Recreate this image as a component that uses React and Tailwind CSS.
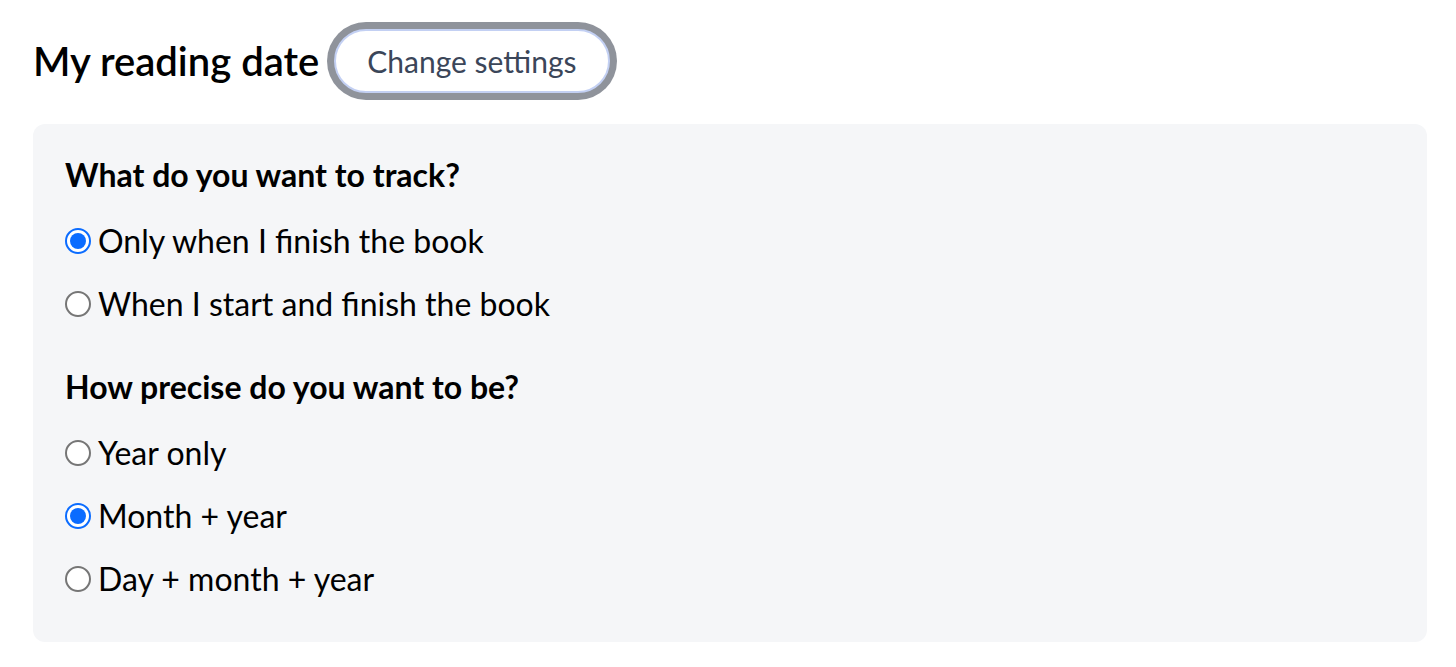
import React, { useState } from "react";

const font = { fontFamily: "Lato, 'Noto Sans', sans-serif" };

function Radio({ checked, label, onSelect }) {
  return (
    <label
      className="flex items-center gap-[7px] h-[63px] cursor-pointer"
      onClick={onSelect}
    >
      {checked ? (
        <span className="w-[26px] h-[26px] rounded-full border-[2px] border-[#0b6cff] bg-white flex items-center justify-center shrink-0">
          <span className="w-[16px] h-[16px] rounded-full bg-[#0b6cff]" />
        </span>
      ) : (
        <span className="w-[26px] h-[26px] rounded-full border-[2px] border-[#767676] bg-white shrink-0" />
      )}
      <span className="text-[32px] text-black leading-none">{label}</span>
    </label>
  );
}

export default function App() {
  const [track, setTrack] = useState("finish");
  const [precision, setPrecision] = useState("month");

  return (
    <div className="w-[1456px] h-[667px] bg-white pt-[22px] pl-[33px]" style={font}>
      <div className="flex items-center gap-[8px]">
        <h1 className="text-[40px] font-semibold text-black leading-none">
          My reading date
        </h1>
        <button className="h-[78px] px-[7px] rounded-full bg-[#8f939b] flex items-center">
          <span className="h-[64px] px-[31px] rounded-full bg-white border-[2px] border-[#c3d0f3] flex items-center text-[30px] text-[#3b4659]">
            Change settings
          </span>
        </button>
      </div>

      <div className="mt-[24px] w-[1394px] rounded-[12px] bg-[#f5f6f8] px-[32px] pt-[35px] pb-[32px]">
        <h2 className="text-[32px] font-bold text-black leading-none h-[32px]">
          What do you want to track?
        </h2>
        <div className="mt-[18px]">
          <Radio
            checked={track === "finish"}
            label="Only when I finish the book"
            onSelect={() => setTrack("finish")}
          />
          <Radio
            checked={track === "both"}
            label="When I start and finish the book"
            onSelect={() => setTrack("both")}
          />
        </div>

        <h2 className="mt-[36px] text-[32px] font-bold text-black leading-none h-[32px]">
          How precise do you want to be?
        </h2>
        <div className="mt-[18px]">
          <Radio
            checked={precision === "year"}
            label="Year only"
            onSelect={() => setPrecision("year")}
          />
          <Radio
            checked={precision === "month"}
            label="Month + year"
            onSelect={() => setPrecision("month")}
          />
          <Radio
            checked={precision === "day"}
            label="Day + month + year"
            onSelect={() => setPrecision("day")}
          />
        </div>
      </div>
    </div>
  );
}
